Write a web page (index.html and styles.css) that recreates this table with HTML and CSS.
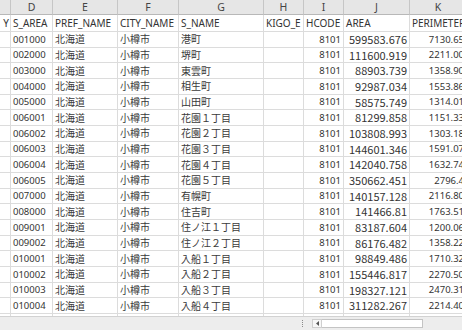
FILE: index.html
```html
<!DOCTYPE html>
<html lang="ja">
<head>
<meta charset="utf-8">
<title>Sheet</title>
<link rel="stylesheet" href="styles.css">
</head>
<body>
<div class="app">
  <div class="grid">
    <div class="row head">
      <div class="c"></div><div class="c">D</div><div class="c">E</div><div class="c">F</div><div class="c">G</div><div class="c">H</div><div class="c">I</div><div class="c">J</div><div class="c">K</div>
    </div>
    <div class="row fields">
      <div class="c num">Y</div><div class="c">S_AREA</div><div class="c">PREF_NAME</div><div class="c">CITY_NAME</div><div class="c">S_NAME</div><div class="c">KIGO_E</div><div class="c">HCODE</div><div class="c">AREA</div><div class="c">PERIMETER</div>
    </div>
    <div class="row"><div class="c"></div><div class="c">001000</div><div class="c jp">北海道</div><div class="c jp">小樽市</div><div class="c jp">港町</div><div class="c"></div><div class="c num">8101</div><div class="c num big">599583.676</div><div class="c num">7130.65</div></div>
    <div class="row"><div class="c"></div><div class="c">002000</div><div class="c jp">北海道</div><div class="c jp">小樽市</div><div class="c jp">堺町</div><div class="c"></div><div class="c num">8101</div><div class="c num big">111600.919</div><div class="c num">2211.00</div></div>
    <div class="row"><div class="c"></div><div class="c">003000</div><div class="c jp">北海道</div><div class="c jp">小樽市</div><div class="c jp">東雲町</div><div class="c"></div><div class="c num">8101</div><div class="c num big">88903.739</div><div class="c num">1358.90</div></div>
    <div class="row"><div class="c"></div><div class="c">004000</div><div class="c jp">北海道</div><div class="c jp">小樽市</div><div class="c jp">相生町</div><div class="c"></div><div class="c num">8101</div><div class="c num big">92987.034</div><div class="c num">1553.86</div></div>
    <div class="row"><div class="c"></div><div class="c">005000</div><div class="c jp">北海道</div><div class="c jp">小樽市</div><div class="c jp">山田町</div><div class="c"></div><div class="c num">8101</div><div class="c num big">58575.749</div><div class="c num">1314.01</div></div>
    <div class="row"><div class="c"></div><div class="c">006001</div><div class="c jp">北海道</div><div class="c jp">小樽市</div><div class="c jp">花園１丁目</div><div class="c"></div><div class="c num">8101</div><div class="c num big">81299.858</div><div class="c num">1151.33</div></div>
    <div class="row"><div class="c"></div><div class="c">006002</div><div class="c jp">北海道</div><div class="c jp">小樽市</div><div class="c jp">花園２丁目</div><div class="c"></div><div class="c num">8101</div><div class="c num big">103808.993</div><div class="c num">1303.18</div></div>
    <div class="row"><div class="c"></div><div class="c">006003</div><div class="c jp">北海道</div><div class="c jp">小樽市</div><div class="c jp">花園３丁目</div><div class="c"></div><div class="c num">8101</div><div class="c num big">144601.346</div><div class="c num">1591.07</div></div>
    <div class="row"><div class="c"></div><div class="c">006004</div><div class="c jp">北海道</div><div class="c jp">小樽市</div><div class="c jp">花園４丁目</div><div class="c"></div><div class="c num">8101</div><div class="c num big">142040.758</div><div class="c num">1632.74</div></div>
    <div class="row"><div class="c"></div><div class="c">006005</div><div class="c jp">北海道</div><div class="c jp">小樽市</div><div class="c jp">花園５丁目</div><div class="c"></div><div class="c num">8101</div><div class="c num big">350662.451</div><div class="c num">2796.4</div></div>
    <div class="row"><div class="c"></div><div class="c">007000</div><div class="c jp">北海道</div><div class="c jp">小樽市</div><div class="c jp">有幌町</div><div class="c"></div><div class="c num">8101</div><div class="c num big">140157.128</div><div class="c num">2116.80</div></div>
    <div class="row"><div class="c"></div><div class="c">008000</div><div class="c jp">北海道</div><div class="c jp">小樽市</div><div class="c jp">住吉町</div><div class="c"></div><div class="c num">8101</div><div class="c num big">141466.81</div><div class="c num">1763.51</div></div>
    <div class="row"><div class="c"></div><div class="c">009001</div><div class="c jp">北海道</div><div class="c jp">小樽市</div><div class="c jp">住ノ江１丁目</div><div class="c"></div><div class="c num">8101</div><div class="c num big">83187.604</div><div class="c num">1200.06</div></div>
    <div class="row"><div class="c"></div><div class="c">009002</div><div class="c jp">北海道</div><div class="c jp">小樽市</div><div class="c jp">住ノ江２丁目</div><div class="c"></div><div class="c num">8101</div><div class="c num big">86176.482</div><div class="c num">1358.22</div></div>
    <div class="row"><div class="c"></div><div class="c">010001</div><div class="c jp">北海道</div><div class="c jp">小樽市</div><div class="c jp">入船１丁目</div><div class="c"></div><div class="c num">8101</div><div class="c num big">98849.486</div><div class="c num">1710.32</div></div>
    <div class="row"><div class="c"></div><div class="c">010002</div><div class="c jp">北海道</div><div class="c jp">小樽市</div><div class="c jp">入船２丁目</div><div class="c"></div><div class="c num">8101</div><div class="c num big">155446.817</div><div class="c num">2270.50</div></div>
    <div class="row"><div class="c"></div><div class="c">010003</div><div class="c jp">北海道</div><div class="c jp">小樽市</div><div class="c jp">入船３丁目</div><div class="c"></div><div class="c num">8101</div><div class="c num big">198327.121</div><div class="c num">2470.31</div></div>
    <div class="row"><div class="c"></div><div class="c">010004</div><div class="c jp">北海道</div><div class="c jp">小樽市</div><div class="c jp">入船４丁目</div><div class="c"></div><div class="c num">8101</div><div class="c num big">311282.267</div><div class="c num">2214.40</div></div>
    <div class="row"><div class="c"></div><div class="c"></div><div class="c"></div><div class="c"></div><div class="c"></div><div class="c"></div><div class="c"></div><div class="c"></div><div class="c"></div></div>
  </div>
  <div class="bar">
    <div class="tabs"></div>
    <div class="grip"></div>
    <div class="hscroll">
      <div class="sbtn"><svg width="3" height="5" viewBox="0 0 3 5"><polygon points="3,0 3,5 0,2.5" fill="#555"/></svg></div>
      <div class="thumb"></div>
    </div>
  </div>
</div>
</body>
</html>
```

FILE: styles.css
```css
html, body {
  margin: 0;
  padding: 0;
  background: #ffffff;
  overflow: hidden;
}

.app {
  width: 462px;
  height: 330px;
  display: flex;
  flex-direction: column;
  overflow: hidden;
}

.grid {
  flex: 1 1 auto;
  overflow: hidden;
  min-height: 0;
}

.row {
  display: grid;
  grid-template-columns: 11px 42px 65px 61px 85px 40px 40px 66px 57px;
  height: 15.68px;
  box-sizing: border-box;
  font-family: "Noto Sans", sans-serif;
  font-size: 9.5px;
  color: #333333;
  white-space: nowrap;
}

.c {
  box-sizing: border-box;
  border-right: 1px solid #dcdcdc;
  border-bottom: 1px solid #dcdcdc;
  padding: 0 2px;
  overflow: visible;
  display: flex;
  align-items: center;
  line-height: 1;
}

.c.num {
  justify-content: flex-end;
}

.c.jp {
  font-family: "Noto Sans CJK JP", sans-serif;
  font-size: 10px;
  color: #3a3a3a;
}

.c.big {
  font-family: "Noto Sans CJK JP", sans-serif;
  font-size: 11px;
}

.row.head {
  height: 15px;
  background: #e6e6e6;
  font-size: 10.5px;
  color: #444444;
}

.row.head .c {
  justify-content: center;
  border-right-color: #c6c6c6;
  border-bottom-color: #b8b8b8;
}

.row.fields {
  height: 17px;
  font-size: 10px;
}

.row.fields .c:first-child {
  justify-content: flex-end;
  padding-right: 1px;
}

.bar {
  flex: 0 0 14px;
  box-sizing: border-box;
  background: #ededed;
  border-top: 1px solid #d2d2d2;
  display: flex;
  align-items: center;
}

.tabs {
  flex: 0 0 302px;
}

.grip {
  width: 1px;
  height: 7px;
  background-image: linear-gradient(#8a8a8a 50%, transparent 50%);
  background-size: 1px 2px;
  margin-right: 9px;
}

.hscroll {
  display: flex;
  height: 9px;
}

.sbtn {
  width: 10px;
  box-sizing: border-box;
  border: 1px solid #cfcfcf;
  background: #f7f7f7;
  display: flex;
  align-items: center;
  justify-content: center;
}

.thumb {
  width: 101px;
  box-sizing: border-box;
  border: 1px solid #c4c4c4;
  border-left: none;
  background: #ffffff;
}
```
